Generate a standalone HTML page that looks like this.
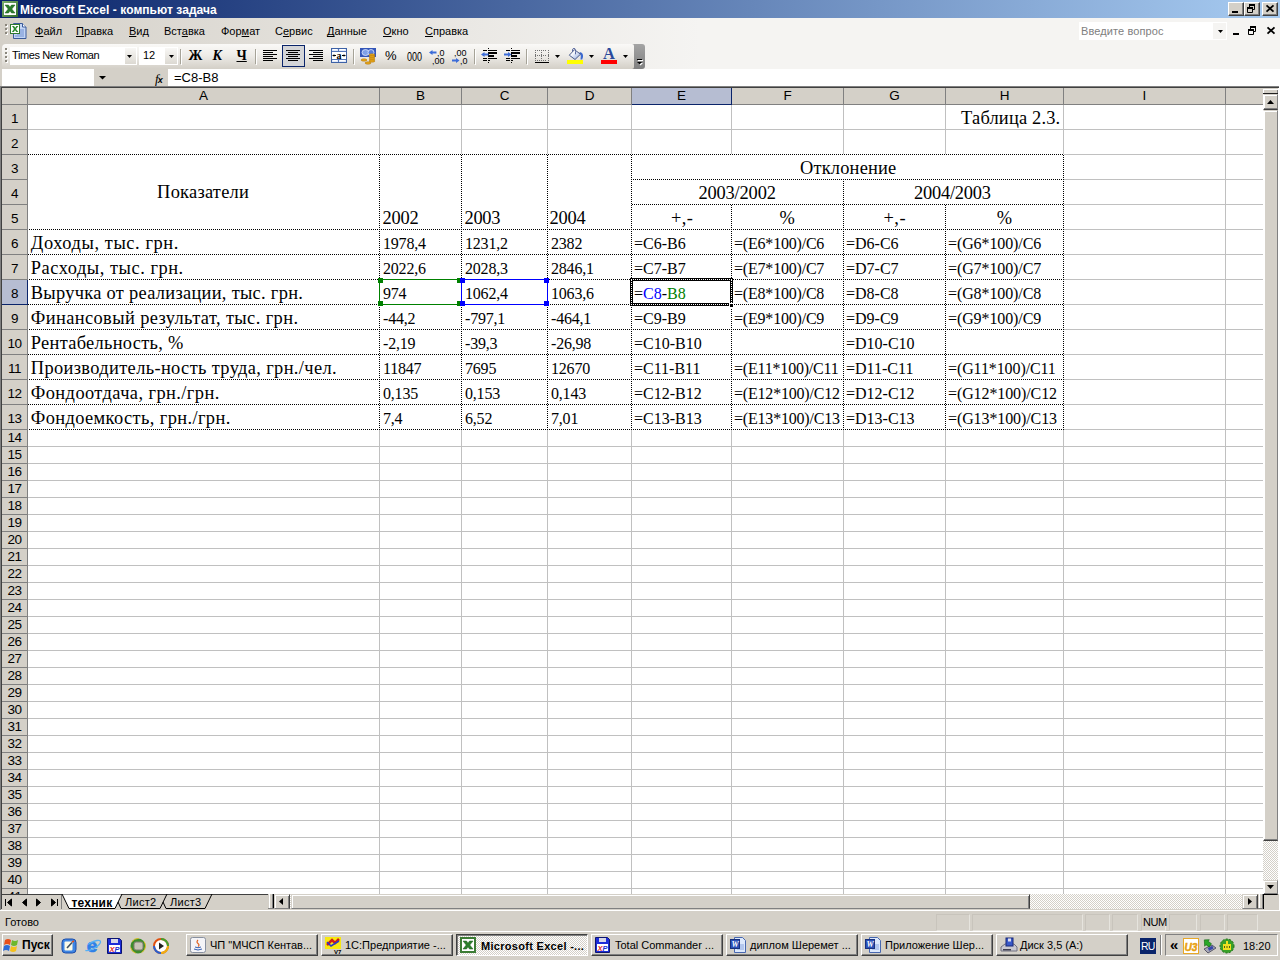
<!DOCTYPE html><html lang="ru"><head><meta charset="utf-8"><title>Microsoft Excel - компьют задача</title><style>
html,body{margin:0;padding:0}
body{width:1280px;height:960px;position:relative;overflow:hidden;background:#d4d0c8;font-family:"Liberation Sans",sans-serif;font-size:11px;color:#000}
.a{position:absolute}
u,.t{text-decoration-skip-ink:none}
.t{position:absolute;white-space:pre;line-height:1}
svg{position:absolute;overflow:visible}
#title{left:0;top:0;width:1280px;height:18px;background:linear-gradient(to right,#0a246a 0,#a6caf0 1270px)}
#title .t{color:#fff;font-weight:bold;font-size:12px;left:20px;top:3.5px;letter-spacing:.05px}
.wb{position:absolute;top:2px;width:14px;height:12px;background:#d4d0c8;border:1px solid;border-color:#fff #404040 #404040 #fff;box-shadow:inset -1px -1px 0 #808080}
#menu{left:0;top:18px;width:1280px;height:26px;background:linear-gradient(to right,#d4d0c8 0,#f5f4f2 700px)}
#menu .t{top:8px;font-size:11px}
#tbrow{left:0;top:44px;width:1280px;height:25px;background:linear-gradient(to right,#d4d0c8 0,#f5f4f2 700px)}
#tb{left:2px;top:0;width:632px;height:25px;border-radius:4px 2px 2px 4px;background:linear-gradient(to bottom,#faf9f7 0,#eeece8 45%,#d3cfc7 100%)}
#tbend{left:631px;top:0;width:14px;height:25px;border-radius:0 3px 3px 0;background:linear-gradient(to bottom,#a4a4a4 0,#808080 100%)}
.sep{position:absolute;top:5px;width:1px;height:15px;background:#a6a398;box-shadow:1px 1px 0 #fff}
#fbar{left:0;top:69px;width:1280px;height:17px;background:#d4d0c8}
.rh{position:absolute;left:2px;width:25px;text-align:center;font-size:13.5px;letter-spacing:-.6px;line-height:1;white-space:pre}
.ch{position:absolute;top:89.2px;text-align:center;font-size:13.5px;line-height:1;white-space:pre}
.c14{position:absolute;white-space:pre;line-height:1;font-family:"Liberation Serif",serif;font-size:18.4px}
.c12{position:absolute;white-space:pre;line-height:1;font-family:"Liberation Serif",serif;font-size:16px}
.hl{position:absolute;height:1px;background:#c0c0c0}
.vl{position:absolute;width:1px;background:#c0c0c0}
.dh{position:absolute;height:1px;background:repeating-conic-gradient(#000 0 25%,#fff 0 50%) 0 0/2px 2px}
.dv{position:absolute;width:1px;background:repeating-conic-gradient(#000 0 25%,#fff 0 50%) 0 0/2px 2px}
.vsb{position:absolute;background:#d4d0c8;box-sizing:border-box;border:1px solid;border-color:#d4d0c8 #808080 #404040 #fff;box-shadow:inset 0 -1px 0 #808080,inset 1px 1px 0 #fff}
.hsb{position:absolute;background:#d4d0c8;box-sizing:border-box;border:1px solid;border-color:#d4d0c8 #404040 #808080 #d4d0c8;box-shadow:inset 1px 1px 0 #fff,inset -1px 0 0 #808080}
.chk{background:repeating-conic-gradient(#fff 0 25%,#d4d0c8 0 50%) 0 0/2px 2px}
.btn{position:absolute;background:#d4d0c8;box-sizing:border-box;border:1px solid;border-color:#fff #404040 #404040 #fff;box-shadow:inset -1px -1px 0 #808080}
.sbtn{position:absolute;background:#d4d0c8;box-sizing:border-box;border:1px solid;border-color:#d4d0c8 #404040 #404040 #d4d0c8;box-shadow:inset -1px -1px 0 #808080,inset 1px 1px 0 #fff}
.tk{position:absolute;top:934px;width:132px;height:22px;box-sizing:border-box;background:#d4d0c8;border:1px solid;border-color:#fff #404040 #404040 #fff;box-shadow:inset -1px -1px 0 #808080}
.tk .t{left:23px;top:5px;font-size:11px;letter-spacing:0}
.tk.on{border-color:#404040 #fff #fff #404040;box-shadow:inset 1px 1px 0 #808080;background:repeating-conic-gradient(#fff 0 25%,#d4d0c8 0 50%) 0 0/2px 2px}
.tk.on .t{font-weight:bold;top:6px;left:24px;letter-spacing:.3px}
.sp{position:absolute;top:914px;height:17px;box-sizing:border-box;border:1px solid;border-color:#c8c4bc #e6e4de #e6e4de #c8c4bc}
</style></head><body>
<div id="title" class="a"><span class="t">Microsoft Excel - компьют задача</span>
<div class="wb" style="left:1228px"></div><div class="wb" style="left:1244px"></div><div class="wb" style="left:1262px"></div>
</div>
<svg style="left:2px;top:1px" width="16" height="16" viewBox="0 0 16 16" ><defs><linearGradient id="g1" x1="0" y1="0" x2="1" y2="1"><stop offset="0" stop-color="#7fb26f"/><stop offset="1" stop-color="#2f6a2a"/></linearGradient></defs><rect width="16" height="16" fill="url(#g1)"/><rect x="2" y="2" width="12" height="12" fill="#fff"/><path d="M3 4 L6.500 4 L8 6.200 L9.500 4 L13 4 L9.800 8 L13 12 L9.500 12 L8 9.800 L6.500 12 L3 12 L6.200 8 Z" fill="#2a7e2a" stroke="#1c5c1c" stroke-width=".5"/></svg>
<svg style="left:1228px;top:2px" width="16" height="14" viewBox="0 0 16 14" ><rect x="4" y="9" width="6" height="2" fill="#000"/></svg>
<svg style="left:1244px;top:2px" width="16" height="14" viewBox="0 0 16 14" ><path d="M5.5 2.5h5v5h-5z" fill="none" stroke="#000"/><rect x="5" y="2" width="6" height="2" fill="#000"/><path d="M3.5 5.5h5v5h-5z" fill="#d4d0c8" stroke="#000"/><rect x="3" y="5" width="6" height="2" fill="#000"/></svg>
<svg style="left:1262px;top:2px" width="16" height="14" viewBox="0 0 16 14" ><path d="M4.5 3.3 L11.5 9.700 M11.5 3.3 L4.5 9.700" stroke="#000" stroke-width="1.8" fill="none"/></svg>
<div id="menu" class="a">
<span class="t" style="left:35px"><u>Ф</u>айл</span>
<span class="t" style="left:76px"><u>П</u>равка</span>
<span class="t" style="left:129px"><u>В</u>ид</span>
<span class="t" style="left:164px">Вст<u>а</u>вка</span>
<span class="t" style="left:221px">Фор<u>м</u>ат</span>
<span class="t" style="left:275px">С<u>е</u>рвис</span>
<span class="t" style="left:327px"><u>Д</u>анные</span>
<span class="t" style="left:383px"><u>О</u>кно</span>
<span class="t" style="left:425px"><u>С</u>правка</span>
<div class="a" style="left:1079px;top:4px;width:148px;height:18px;background:#fff"></div>
<div class="a" style="left:1213px;top:5px;width:13px;height:16px;background:#f5f4f2"></div>
<span class="t" style="left:1081px;top:8px;color:#808080;letter-spacing:.1px">Введите вопрос</span>
</div>
<svg style="left:1218px;top:30px" width="5" height="3" viewBox="0 0 5 3" ><path d="M0 0h5l-2.500 3z" fill="#000"/></svg>
<svg style="left:1230px;top:24px" width="48" height="14" viewBox="0 0 48 14" ><rect x="3" y="9" width="6" height="2" fill="#000"/><path d="M20.5 2.5h5v5h-5z" fill="none" stroke="#000"/><rect x="20" y="2" width="6" height="2" fill="#000"/><path d="M18.5 5.5h5v5h-5z" fill="#f5f4f2" stroke="#000"/><rect x="18" y="5" width="6" height="2" fill="#000"/><path d="M37.5 3.3 L44.5 9.700 M44.5 3.3 L37.5 9.700" stroke="#000" stroke-width="1.8" fill="none"/></svg>
<svg style="left:5px;top:24px" width="3" height="12" viewBox="0 0 3 12" ><rect x="1" y="1" width="2" height="2" fill="#fff"/><rect x="0" y="0" width="2" height="2" fill="#8a867c"/><rect x="1" y="5" width="2" height="2" fill="#fff"/><rect x="0" y="4" width="2" height="2" fill="#8a867c"/><rect x="1" y="9" width="2" height="2" fill="#fff"/><rect x="0" y="8" width="2" height="2" fill="#8a867c"/></svg>
<svg style="left:9px;top:22px" width="18" height="17" viewBox="0 0 18 17" ><path d="M4.5 1.5h9l3.5 3.5v11.5h-12.5z" fill="#c3d5f5" stroke="#3a5a9a"/><path d="M13.5 1.5v3.5h3.5" fill="#fff" stroke="#3a5a9a"/><path d="M8 8h7M8 10h7M8 12h7M6 14h9" stroke="#6f8fd0" stroke-width="1"/><rect x="1.500" y="2.500" width="9" height="9" fill="#fff" stroke="#2f7a2f"/><path d="M3 4h2l1.200 1.800L7.400 4h2L7 7l2.400 3h-2L6 8.200 4.800 10h-2L5 7z" fill="#2e8b2e"/></svg>
<div id="tbrow" class="a"><div id="tbend" class="a"></div><div id="tb" class="a"></div>
<div class="a" style="left:10px;top:3px;width:127px;height:18px;background:#fff"></div>
<div class="a" style="left:125px;top:4px;width:11px;height:16px;background:linear-gradient(#f8f7f5,#dcd9d2)"></div>
<span class="t" style="left:12px;top:6px;letter-spacing:-.4px">Times New Roman</span>
<div class="a" style="left:139px;top:3px;width:39px;height:18px;background:#fff"></div>
<div class="a" style="left:165px;top:4px;width:12px;height:16px;background:linear-gradient(#f8f7f5,#dcd9d2)"></div>
<span class="t" style="left:143px;top:6px">12</span>
<div class="sep" style="left:180px"></div>
<div class="sep" style="left:255px"></div>
<div class="sep" style="left:353px"></div>
<div class="sep" style="left:474px"></div>
<div class="sep" style="left:526px"></div>
<div class="a" style="left:282px;top:1px;width:21px;height:20px;border:1px solid #0a246a;background:#d4d5d8"></div>
<span class="t" style="left:188.5px;top:5px;font-family:'Liberation Serif',serif;font-weight:bold;font-size:14px">Ж</span>
<span class="t" style="left:212.5px;top:5px;font-family:'Liberation Serif',serif;font-weight:bold;font-style:italic;font-size:14px">К</span>
<span class="t" style="left:236.5px;top:5px;font-family:'Liberation Serif',serif;font-weight:bold;font-size:14px;text-decoration:underline">Ч</span>
<span class="t" style="left:385px;top:5px;font-size:13px">%</span>
</div>
<svg style="left:5px;top:48px" width="3" height="16" viewBox="0 0 3 16" ><rect x="1" y="1" width="2" height="2" fill="#fff"/><rect x="0" y="0" width="2" height="2" fill="#8a867c"/><rect x="1" y="5" width="2" height="2" fill="#fff"/><rect x="0" y="4" width="2" height="2" fill="#8a867c"/><rect x="1" y="9" width="2" height="2" fill="#fff"/><rect x="0" y="8" width="2" height="2" fill="#8a867c"/><rect x="1" y="13" width="2" height="2" fill="#fff"/><rect x="0" y="12" width="2" height="2" fill="#8a867c"/></svg>
<svg style="left:127px;top:55px" width="5" height="3" viewBox="0 0 5 3" ><path d="M0 0h5l-2.500 3z" fill="#000"/></svg>
<svg style="left:169px;top:55px" width="5" height="3" viewBox="0 0 5 3" ><path d="M0 0h5l-2.500 3z" fill="#000"/></svg>
<svg style="left:263px;top:50px" width="16" height="12" viewBox="0 0 16 12" ><rect x="0" y="0" width="14" height="1" fill="#000"/><rect x="0" y="2" width="10" height="1" fill="#000"/><rect x="0" y="4" width="14" height="1" fill="#000"/><rect x="0" y="6" width="10" height="1" fill="#000"/><rect x="0" y="8" width="14" height="1" fill="#000"/><rect x="0" y="10" width="10" height="1" fill="#000"/></svg>
<svg style="left:286px;top:50px" width="16" height="12" viewBox="0 0 16 12" ><rect x="0" y="0" width="14" height="1" fill="#000"/><rect x="2" y="2" width="10" height="1" fill="#000"/><rect x="0" y="4" width="14" height="1" fill="#000"/><rect x="2" y="6" width="10" height="1" fill="#000"/><rect x="0" y="8" width="14" height="1" fill="#000"/><rect x="2" y="10" width="10" height="1" fill="#000"/></svg>
<svg style="left:309px;top:50px" width="16" height="12" viewBox="0 0 16 12" ><rect x="0" y="0" width="14" height="1" fill="#000"/><rect x="4" y="2" width="10" height="1" fill="#000"/><rect x="0" y="4" width="14" height="1" fill="#000"/><rect x="4" y="6" width="10" height="1" fill="#000"/><rect x="0" y="8" width="14" height="1" fill="#000"/><rect x="4" y="10" width="10" height="1" fill="#000"/></svg>
<svg style="left:331px;top:48px" width="16" height="15" viewBox="0 0 16 15" ><rect x="0.500" y="0.500" width="15" height="14" fill="#dfe8fa" stroke="#3e62a6"/><rect x="1" y="4" width="14" height="7" fill="#fff"/><path d="M1 3.500h14M1 11.500h14M7.500 1v3M7.500 11v3" stroke="#5476b8" stroke-width="1"/><path d="M2 1.500h4M9 1.500h5M2 12.500h4M9 12.500h5" stroke="#fff"/><text x="8" y="10.500" font-family="Liberation Serif,serif" font-weight="bold" font-size="10" text-anchor="middle" fill="#000">a</text><path d="M1.500 7.500h3.500M11 7.500h3.500M3 6.500v2M13 6.500v2" stroke="#000"/></svg>
<svg style="left:360px;top:48px" width="17" height="17" viewBox="0 0 17 17" ><rect x="0" y="0" width="16" height="9" fill="#3456b8"/><ellipse cx="5.500" cy="4.500" rx="3.500" ry="3" fill="#7fa0e8" stroke="#dfe8ff" stroke-width=".8"/><ellipse cx="11" cy="4.500" rx="3" ry="3" fill="#5a7fd8" stroke="#dfe8ff" stroke-width=".8"/><g fill="#e8a818" stroke="#a86c08" stroke-width=".5"><ellipse cx="12" cy="7" rx="3" ry="1.200"/><ellipse cx="12" cy="9" rx="3" ry="1.200"/><ellipse cx="12" cy="11" rx="3" ry="1.200"/><ellipse cx="12" cy="13" rx="3" ry="1.200"/><ellipse cx="4" cy="12" rx="3" ry="1.200"/><ellipse cx="8" cy="15" rx="3" ry="1.200"/></g></svg>
<svg style="left:407px;top:51px" width="16" height="11" viewBox="0 0 16 11" ><text x="0" y="10" font-family="Liberation Sans,sans-serif" font-size="13" textLength="15" lengthAdjust="spacingAndGlyphs" fill="#000">000</text></svg>
<svg style="left:429px;top:48px" width="17" height="16" viewBox="0 0 17 16" ><path d="M0 4.5l3.500 -2.500v1.500h4v2h-4v1.500z" fill="#3c6cd8"/><text x="8" y="7.500" font-family="Liberation Sans,sans-serif" font-size="9.500" textLength="7.500" lengthAdjust="spacingAndGlyphs">,0</text><text x="3" y="15.500" font-family="Liberation Sans,sans-serif" font-size="9.500" textLength="12.500" lengthAdjust="spacingAndGlyphs">,00</text></svg>
<svg style="left:452px;top:48px" width="17" height="16" viewBox="0 0 17 16" ><path d="M7.5 12.5l-3.500 -2.500v1.500h-4v2h4v1.500z" fill="#3c6cd8"/><text x="2" y="7.500" font-family="Liberation Sans,sans-serif" font-size="9.500" textLength="12.500" lengthAdjust="spacingAndGlyphs">,00</text><text x="8" y="15.500" font-family="Liberation Sans,sans-serif" font-size="9.500" textLength="7.500" lengthAdjust="spacingAndGlyphs">,0</text></svg>
<svg style="left:481px;top:48px" width="17" height="16" viewBox="0 0 17 16" ><path d="M2 2.500h4M2 10.500h4M2 12.500h4M7 2.500h9M7 10.500h9M7 12.500h2" stroke="#000"/><rect x="7" y="4" width="9" height="2" fill="#000"/><rect x="7" y="7" width="6" height="2" fill="#000"/><rect x="7" y="0" width="1" height="1" fill="#000"/><rect x="7" y="2" width="1" height="1" fill="#000"/><rect x="7" y="4" width="1" height="1" fill="#000"/><rect x="7" y="6" width="1" height="1" fill="#000"/><rect x="7" y="8" width="1" height="1" fill="#000"/><rect x="7" y="10" width="1" height="1" fill="#000"/><rect x="7" y="12" width="1" height="1" fill="#000"/><rect x="7" y="14" width="1" height="1" fill="#000"/><path d="M0 6.5l3.500 -2.500v1.500h4v2h-4v1.500z" fill="#3c6cd8"/></svg>
<svg style="left:504px;top:48px" width="17" height="16" viewBox="0 0 17 16" ><path d="M2 2.500h4M2 10.500h4M2 12.500h4M7 2.500h9M7 10.500h9M7 12.500h2" stroke="#000"/><rect x="7" y="4" width="9" height="2" fill="#000"/><rect x="7" y="7" width="6" height="2" fill="#000"/><rect x="7" y="0" width="1" height="1" fill="#000"/><rect x="7" y="2" width="1" height="1" fill="#000"/><rect x="7" y="4" width="1" height="1" fill="#000"/><rect x="7" y="6" width="1" height="1" fill="#000"/><rect x="7" y="8" width="1" height="1" fill="#000"/><rect x="7" y="10" width="1" height="1" fill="#000"/><rect x="7" y="12" width="1" height="1" fill="#000"/><rect x="7" y="14" width="1" height="1" fill="#000"/><path d="M7.5 6.5l-3.500 -2.500v1.500h-4v2h4v1.500z" fill="#3c6cd8"/></svg>
<svg style="left:535px;top:50px" width="14" height="14" viewBox="0 0 14 14" ><rect x="0" y="0" width="1" height="1" fill="#707070"/><rect x="2" y="0" width="1" height="1" fill="#707070"/><rect x="4" y="0" width="1" height="1" fill="#707070"/><rect x="6" y="0" width="1" height="1" fill="#707070"/><rect x="8" y="0" width="1" height="1" fill="#707070"/><rect x="10" y="0" width="1" height="1" fill="#707070"/><rect x="13" y="0" width="1" height="1" fill="#707070"/><rect x="0" y="5" width="1" height="1" fill="#707070"/><rect x="2" y="5" width="1" height="1" fill="#707070"/><rect x="4" y="5" width="1" height="1" fill="#707070"/><rect x="6" y="5" width="1" height="1" fill="#707070"/><rect x="8" y="5" width="1" height="1" fill="#707070"/><rect x="10" y="5" width="1" height="1" fill="#707070"/><rect x="13" y="5" width="1" height="1" fill="#707070"/><rect x="0" y="10" width="1" height="1" fill="#707070"/><rect x="2" y="10" width="1" height="1" fill="#707070"/><rect x="4" y="10" width="1" height="1" fill="#707070"/><rect x="6" y="10" width="1" height="1" fill="#707070"/><rect x="8" y="10" width="1" height="1" fill="#707070"/><rect x="10" y="10" width="1" height="1" fill="#707070"/><rect x="13" y="10" width="1" height="1" fill="#707070"/><rect x="0" y="0" width="1" height="1" fill="#707070"/><rect x="0" y="2" width="1" height="1" fill="#707070"/><rect x="0" y="4" width="1" height="1" fill="#707070"/><rect x="0" y="6" width="1" height="1" fill="#707070"/><rect x="0" y="8" width="1" height="1" fill="#707070"/><rect x="0" y="10" width="1" height="1" fill="#707070"/><rect x="6" y="0" width="1" height="1" fill="#707070"/><rect x="6" y="2" width="1" height="1" fill="#707070"/><rect x="6" y="4" width="1" height="1" fill="#707070"/><rect x="6" y="6" width="1" height="1" fill="#707070"/><rect x="6" y="8" width="1" height="1" fill="#707070"/><rect x="6" y="10" width="1" height="1" fill="#707070"/><rect x="13" y="0" width="1" height="1" fill="#707070"/><rect x="13" y="2" width="1" height="1" fill="#707070"/><rect x="13" y="4" width="1" height="1" fill="#707070"/><rect x="13" y="6" width="1" height="1" fill="#707070"/><rect x="13" y="8" width="1" height="1" fill="#707070"/><rect x="13" y="10" width="1" height="1" fill="#707070"/><rect x="0" y="12" width="14" height="1" fill="#000"/></svg>
<svg style="left:555px;top:55px" width="5" height="3" viewBox="0 0 5 3" ><path d="M0 0h5l-2.500 3z" fill="#000"/></svg>
<svg style="left:589px;top:55px" width="5" height="3" viewBox="0 0 5 3" ><path d="M0 0h5l-2.500 3z" fill="#000"/></svg>
<svg style="left:623px;top:55px" width="5" height="3" viewBox="0 0 5 3" ><path d="M0 0h5l-2.500 3z" fill="#000"/></svg>
<svg style="left:567px;top:47px" width="17" height="17" viewBox="0 0 17 17" ><defs><linearGradient id="gb" x1="0" y1="0" x2="1" y2="1"><stop offset=".3" stop-color="#fff"/><stop offset="1" stop-color="#8aa4dc"/></linearGradient></defs><rect x="0" y="13" width="16" height="4" fill="#ff0"/><path d="M12.500 5q4 .5 3.500 5l-.8 2.500l-1.700 0l.3 -3.500z" fill="#3a68d0"/><path d="M2.300 8.200L7.500 2.700L13.500 7.200L8 12.500z" fill="url(#gb)" stroke="#3a4c80" stroke-width=".9"/><path d="M5.500 4.800q-.5 -3.500 1.500 -3.500t1.500 6" fill="none" stroke="#54649c" stroke-width="1"/></svg>
<svg style="left:601px;top:47px" width="17" height="17" viewBox="0 0 17 17" ><rect x="0" y="13" width="16" height="4" fill="#f00"/><text x="8" y="11.500" text-anchor="middle" font-family="Liberation Serif,serif" font-weight="bold" font-size="16.500" fill="#2a4a9c">A</text></svg>
<svg style="left:637px;top:59px" width="7" height="7" viewBox="0 0 7 7" ><rect x="1" y="1" width="5" height="1" fill="#fff"/><rect x="0" y="0" width="5" height="1" fill="#000"/><path d="M1 4h5l-2.500 2.500z" fill="#fff"/><path d="M0 3h5l-2.500 2.500z" fill="#000"/></svg>
<div id="fbar" class="a">
<div class="a" style="left:2px;top:0;width:92px;height:17px;background:#fff"></div>
<span class="t" style="left:40px;top:2px;font-size:13px">E8</span>
<div class="a" style="left:168px;top:0;width:1112px;height:17px;background:#fff"></div>
<span class="t" style="left:174px;top:2px;font-size:13px">=C8-B8</span>
<span class="t" style="left:155px;top:3px;font-family:'Liberation Serif',serif;font-style:italic;font-size:13px">f<span style="font-family:'Liberation Sans',sans-serif;font-size:9px;font-weight:bold;margin-left:-1px">x</span></span>
</div>
<svg style="left:99px;top:76px" width="8" height="4" viewBox="0 0 8 4" ><path d="M0 0h7l-3.500 3.500z" fill="#000"/></svg>
<div class="a" style="left:0;top:86px;width:1280px;height:808px;background:#fff"></div>
<div class="a" style="left:0;top:86px;width:1279px;height:1px;background:#808080"></div>
<div class="a" style="left:0;top:87px;width:1279px;height:1px;background:#404040"></div>
<div class="a" style="left:0;top:86px;width:1px;height:824px;background:#808080"></div>
<div class="a" style="left:1px;top:87px;width:1px;height:822px;background:#404040"></div>
<div class="a" style="left:2px;top:88px;width:1261px;height:16px;background:#d4d0c8"></div>
<div class="a" style="left:2px;top:88px;width:25px;height:806px;background:#d4d0c8"></div>
<div class="vl" style="left:379px;top:105px;height:789px"></div>
<div class="vl" style="left:461px;top:105px;height:789px"></div>
<div class="vl" style="left:547px;top:105px;height:789px"></div>
<div class="vl" style="left:631px;top:105px;height:789px"></div>
<div class="vl" style="left:731px;top:105px;height:789px"></div>
<div class="vl" style="left:843px;top:105px;height:789px"></div>
<div class="vl" style="left:945px;top:105px;height:789px"></div>
<div class="vl" style="left:1063px;top:105px;height:789px"></div>
<div class="vl" style="left:1225px;top:105px;height:789px"></div>
<div class="hl" style="left:28px;top:129px;width:1235px"></div>
<div class="hl" style="left:28px;top:154px;width:1235px"></div>
<div class="hl" style="left:28px;top:179px;width:1235px"></div>
<div class="hl" style="left:28px;top:204px;width:1235px"></div>
<div class="hl" style="left:28px;top:229px;width:1235px"></div>
<div class="hl" style="left:28px;top:254px;width:1235px"></div>
<div class="hl" style="left:28px;top:279px;width:1235px"></div>
<div class="hl" style="left:28px;top:304px;width:1235px"></div>
<div class="hl" style="left:28px;top:329px;width:1235px"></div>
<div class="hl" style="left:28px;top:354px;width:1235px"></div>
<div class="hl" style="left:28px;top:379px;width:1235px"></div>
<div class="hl" style="left:28px;top:404px;width:1235px"></div>
<div class="hl" style="left:28px;top:429px;width:1235px"></div>
<div class="hl" style="left:28px;top:446px;width:1235px"></div>
<div class="hl" style="left:28px;top:463px;width:1235px"></div>
<div class="hl" style="left:28px;top:480px;width:1235px"></div>
<div class="hl" style="left:28px;top:497px;width:1235px"></div>
<div class="hl" style="left:28px;top:514px;width:1235px"></div>
<div class="hl" style="left:28px;top:531px;width:1235px"></div>
<div class="hl" style="left:28px;top:548px;width:1235px"></div>
<div class="hl" style="left:28px;top:565px;width:1235px"></div>
<div class="hl" style="left:28px;top:582px;width:1235px"></div>
<div class="hl" style="left:28px;top:599px;width:1235px"></div>
<div class="hl" style="left:28px;top:616px;width:1235px"></div>
<div class="hl" style="left:28px;top:633px;width:1235px"></div>
<div class="hl" style="left:28px;top:650px;width:1235px"></div>
<div class="hl" style="left:28px;top:667px;width:1235px"></div>
<div class="hl" style="left:28px;top:684px;width:1235px"></div>
<div class="hl" style="left:28px;top:701px;width:1235px"></div>
<div class="hl" style="left:28px;top:718px;width:1235px"></div>
<div class="hl" style="left:28px;top:735px;width:1235px"></div>
<div class="hl" style="left:28px;top:752px;width:1235px"></div>
<div class="hl" style="left:28px;top:769px;width:1235px"></div>
<div class="hl" style="left:28px;top:786px;width:1235px"></div>
<div class="hl" style="left:28px;top:803px;width:1235px"></div>
<div class="hl" style="left:28px;top:820px;width:1235px"></div>
<div class="hl" style="left:28px;top:837px;width:1235px"></div>
<div class="hl" style="left:28px;top:854px;width:1235px"></div>
<div class="hl" style="left:28px;top:871px;width:1235px"></div>
<div class="hl" style="left:28px;top:888px;width:1235px"></div>
<div class="a" style="left:2px;top:104px;width:1261px;height:1px;background:#808080"></div>
<div class="a" style="left:27px;top:88px;width:1px;height:806px;background:#808080"></div>
<div class="a" style="left:379px;top:88px;width:1px;height:16px;background:#808080"></div>
<div class="a" style="left:461px;top:88px;width:1px;height:16px;background:#808080"></div>
<div class="a" style="left:547px;top:88px;width:1px;height:16px;background:#808080"></div>
<div class="a" style="left:631px;top:88px;width:1px;height:16px;background:#808080"></div>
<div class="a" style="left:731px;top:88px;width:1px;height:16px;background:#808080"></div>
<div class="a" style="left:843px;top:88px;width:1px;height:16px;background:#808080"></div>
<div class="a" style="left:945px;top:88px;width:1px;height:16px;background:#808080"></div>
<div class="a" style="left:1063px;top:88px;width:1px;height:16px;background:#808080"></div>
<div class="a" style="left:1225px;top:88px;width:1px;height:16px;background:#808080"></div>
<div class="a" style="left:2px;top:129px;width:25px;height:1px;background:#808080"></div>
<div class="a" style="left:2px;top:154px;width:25px;height:1px;background:#808080"></div>
<div class="a" style="left:2px;top:179px;width:25px;height:1px;background:#808080"></div>
<div class="a" style="left:2px;top:204px;width:25px;height:1px;background:#808080"></div>
<div class="a" style="left:2px;top:229px;width:25px;height:1px;background:#808080"></div>
<div class="a" style="left:2px;top:254px;width:25px;height:1px;background:#808080"></div>
<div class="a" style="left:2px;top:279px;width:25px;height:1px;background:#808080"></div>
<div class="a" style="left:2px;top:304px;width:25px;height:1px;background:#808080"></div>
<div class="a" style="left:2px;top:329px;width:25px;height:1px;background:#808080"></div>
<div class="a" style="left:2px;top:354px;width:25px;height:1px;background:#808080"></div>
<div class="a" style="left:2px;top:379px;width:25px;height:1px;background:#808080"></div>
<div class="a" style="left:2px;top:404px;width:25px;height:1px;background:#808080"></div>
<div class="a" style="left:2px;top:429px;width:25px;height:1px;background:#808080"></div>
<div class="a" style="left:2px;top:446px;width:25px;height:1px;background:#808080"></div>
<div class="a" style="left:2px;top:463px;width:25px;height:1px;background:#808080"></div>
<div class="a" style="left:2px;top:480px;width:25px;height:1px;background:#808080"></div>
<div class="a" style="left:2px;top:497px;width:25px;height:1px;background:#808080"></div>
<div class="a" style="left:2px;top:514px;width:25px;height:1px;background:#808080"></div>
<div class="a" style="left:2px;top:531px;width:25px;height:1px;background:#808080"></div>
<div class="a" style="left:2px;top:548px;width:25px;height:1px;background:#808080"></div>
<div class="a" style="left:2px;top:565px;width:25px;height:1px;background:#808080"></div>
<div class="a" style="left:2px;top:582px;width:25px;height:1px;background:#808080"></div>
<div class="a" style="left:2px;top:599px;width:25px;height:1px;background:#808080"></div>
<div class="a" style="left:2px;top:616px;width:25px;height:1px;background:#808080"></div>
<div class="a" style="left:2px;top:633px;width:25px;height:1px;background:#808080"></div>
<div class="a" style="left:2px;top:650px;width:25px;height:1px;background:#808080"></div>
<div class="a" style="left:2px;top:667px;width:25px;height:1px;background:#808080"></div>
<div class="a" style="left:2px;top:684px;width:25px;height:1px;background:#808080"></div>
<div class="a" style="left:2px;top:701px;width:25px;height:1px;background:#808080"></div>
<div class="a" style="left:2px;top:718px;width:25px;height:1px;background:#808080"></div>
<div class="a" style="left:2px;top:735px;width:25px;height:1px;background:#808080"></div>
<div class="a" style="left:2px;top:752px;width:25px;height:1px;background:#808080"></div>
<div class="a" style="left:2px;top:769px;width:25px;height:1px;background:#808080"></div>
<div class="a" style="left:2px;top:786px;width:25px;height:1px;background:#808080"></div>
<div class="a" style="left:2px;top:803px;width:25px;height:1px;background:#808080"></div>
<div class="a" style="left:2px;top:820px;width:25px;height:1px;background:#808080"></div>
<div class="a" style="left:2px;top:837px;width:25px;height:1px;background:#808080"></div>
<div class="a" style="left:2px;top:854px;width:25px;height:1px;background:#808080"></div>
<div class="a" style="left:2px;top:871px;width:25px;height:1px;background:#808080"></div>
<div class="a" style="left:2px;top:888px;width:25px;height:1px;background:#808080"></div>
<div class="a" style="left:632px;top:88px;width:99px;height:16px;background:#b6bdd2;border-bottom:1px solid #0a246a;border-right:1px solid #0a246a"></div>
<div class="a" style="left:2px;top:280px;width:25px;height:24px;background:#b6bdd2;border-bottom:1px solid #0a246a;border-right:1px solid #0a246a"></div>
<span class="ch" style="left:28px;width:351px">A</span>
<span class="ch" style="left:380px;width:81px">B</span>
<span class="ch" style="left:462px;width:85px">C</span>
<span class="ch" style="left:548px;width:83px">D</span>
<span class="ch" style="left:632px;width:99px">E</span>
<span class="ch" style="left:732px;width:111px">F</span>
<span class="ch" style="left:844px;width:101px">G</span>
<span class="ch" style="left:946px;width:117px">H</span>
<span class="ch" style="left:1064px;width:161px">I</span>
<span class="rh" style="top:112.2px">1</span>
<span class="rh" style="top:137.2px">2</span>
<span class="rh" style="top:162.2px">3</span>
<span class="rh" style="top:187.2px">4</span>
<span class="rh" style="top:212.2px">5</span>
<span class="rh" style="top:237.2px">6</span>
<span class="rh" style="top:262.2px">7</span>
<span class="rh" style="top:287.2px">8</span>
<span class="rh" style="top:312.2px">9</span>
<span class="rh" style="top:337.2px">10</span>
<span class="rh" style="top:362.2px">11</span>
<span class="rh" style="top:387.2px">12</span>
<span class="rh" style="top:412.2px">13</span>
<span class="rh" style="top:431.2px">14</span>
<span class="rh" style="top:448.2px">15</span>
<span class="rh" style="top:465.2px">16</span>
<span class="rh" style="top:482.2px">17</span>
<span class="rh" style="top:499.2px">18</span>
<span class="rh" style="top:516.2px">19</span>
<span class="rh" style="top:533.2px">20</span>
<span class="rh" style="top:550.2px">21</span>
<span class="rh" style="top:567.2px">22</span>
<span class="rh" style="top:584.2px">23</span>
<span class="rh" style="top:601.2px">24</span>
<span class="rh" style="top:618.2px">25</span>
<span class="rh" style="top:635.2px">26</span>
<span class="rh" style="top:652.2px">27</span>
<span class="rh" style="top:669.2px">28</span>
<span class="rh" style="top:686.2px">29</span>
<span class="rh" style="top:703.2px">30</span>
<span class="rh" style="top:720.2px">31</span>
<span class="rh" style="top:737.2px">32</span>
<span class="rh" style="top:754.2px">33</span>
<span class="rh" style="top:771.2px">34</span>
<span class="rh" style="top:788.2px">35</span>
<span class="rh" style="top:805.2px">36</span>
<span class="rh" style="top:822.2px">37</span>
<span class="rh" style="top:839.2px">38</span>
<span class="rh" style="top:856.2px">39</span>
<span class="rh" style="top:873.2px">40</span>
<div class="a" style="left:2px;top:889px;width:25px;height:5px;overflow:hidden"><span class="rh" style="left:0;top:1.2px">41</span></div>
<div class="a" style="left:28px;top:155px;width:1035px;height:274px;background:#fff"></div>
<div class="dh" style="left:28px;top:154px;width:1036px;background-position:1px 0px"></div>
<div class="dh" style="left:631px;top:179px;width:433px;background-position:0px 1px"></div>
<div class="dh" style="left:631px;top:204px;width:433px;background-position:0px 0px"></div>
<div class="dh" style="left:28px;top:229px;width:1036px;background-position:1px 1px"></div>
<div class="dh" style="left:28px;top:254px;width:1036px;background-position:1px 0px"></div>
<div class="dh" style="left:28px;top:279px;width:1036px;background-position:1px 1px"></div>
<div class="dh" style="left:28px;top:304px;width:1036px;background-position:1px 0px"></div>
<div class="dh" style="left:28px;top:329px;width:1036px;background-position:1px 1px"></div>
<div class="dh" style="left:28px;top:354px;width:1036px;background-position:1px 0px"></div>
<div class="dh" style="left:28px;top:379px;width:1036px;background-position:1px 1px"></div>
<div class="dh" style="left:28px;top:404px;width:1036px;background-position:1px 0px"></div>
<div class="dh" style="left:28px;top:429px;width:1036px;background-position:1px 1px"></div>
<div class="dv" style="left:379px;top:154px;height:276px;background-position:0px 0px"></div>
<div class="dv" style="left:461px;top:154px;height:276px;background-position:0px 0px"></div>
<div class="dv" style="left:547px;top:154px;height:276px;background-position:0px 0px"></div>
<div class="dv" style="left:631px;top:154px;height:276px;background-position:0px 0px"></div>
<div class="dv" style="left:1063px;top:154px;height:276px;background-position:0px 0px"></div>
<div class="dv" style="left:843px;top:179px;height:251px;background-position:0px 1px"></div>
<div class="dv" style="left:731px;top:204px;height:226px;background-position:0px 0px"></div>
<div class="dv" style="left:945px;top:204px;height:226px;background-position:0px 0px"></div>
<span class="c14" style="left:961.1px;top:109px;letter-spacing:0.188px">Таблица 2.3.</span>
<span class="c14" style="left:157.1px;top:183px;letter-spacing:0.253px">Показатели</span>
<span class="c14" style="left:799.9px;top:159px;letter-spacing:0.212px">Отклонение</span>
<span class="c14" style="left:698.5px;top:184px;letter-spacing:-0.165px">2003/2002</span>
<span class="c14" style="left:914.1px;top:184px;letter-spacing:-0.243px">2004/2003</span>
<span class="c14" style="left:670.9px;top:209px;letter-spacing:0.502px">+,-</span>
<span class="c14" style="left:779.5px;top:209px;letter-spacing:1.672px">%</span>
<span class="c14" style="left:883.5px;top:209px;letter-spacing:0.502px">+,-</span>
<span class="c14" style="left:996.8px;top:209px;letter-spacing:1.172px">%</span>
<span class="c14" style="left:382.5px;top:209px;letter-spacing:-0.195px">2002</span>
<span class="c14" style="left:464.5px;top:209px;letter-spacing:-0.32px">2003</span>
<span class="c14" style="left:549.5px;top:209px;letter-spacing:-0.195px">2004</span>
<span class="c14" style="left:30.8px;top:234px;letter-spacing:0.578px">Доходы, тыс. грн.</span>
<span class="c12" style="left:383px;top:236px;letter-spacing:-0.2px">1978,4</span>
<span class="c12" style="left:465px;top:236px;letter-spacing:-0.2px">1231,2</span>
<span class="c12" style="left:551px;top:236px;letter-spacing:-0.2px">2382</span>
<span class="c12" style="left:634px;top:236px;letter-spacing:0px">=C6-B6</span>
<span class="c12" style="left:846px;top:236px;letter-spacing:0px">=D6-C6</span>
<span class="c12" style="left:734px;top:236px;letter-spacing:-0.2px">=(E6*100)/C6</span>
<span class="c12" style="left:948px;top:236px;letter-spacing:-0.1px">=(G6*100)/C6</span>
<span class="c14" style="left:30.8px;top:259px;letter-spacing:0.533px">Расходы, тыс. грн.</span>
<span class="c12" style="left:383px;top:261px;letter-spacing:-0.2px">2022,6</span>
<span class="c12" style="left:465px;top:261px;letter-spacing:-0.2px">2028,3</span>
<span class="c12" style="left:551px;top:261px;letter-spacing:-0.2px">2846,1</span>
<span class="c12" style="left:634px;top:261px;letter-spacing:0px">=C7-B7</span>
<span class="c12" style="left:846px;top:261px;letter-spacing:0px">=D7-C7</span>
<span class="c12" style="left:734px;top:261px;letter-spacing:-0.2px">=(E7*100)/C7</span>
<span class="c12" style="left:948px;top:261px;letter-spacing:-0.1px">=(G7*100)/C7</span>
<span class="c14" style="left:30.8px;top:284px;letter-spacing:0.293px">Выручка от реализации, тыс. грн.</span>
<span class="c12" style="left:383px;top:286px;letter-spacing:-0.2px">974</span>
<span class="c12" style="left:465px;top:286px;letter-spacing:-0.2px">1062,4</span>
<span class="c12" style="left:551px;top:286px;letter-spacing:-0.2px">1063,6</span>
<span class="c12" style="left:846px;top:286px;letter-spacing:0px">=D8-C8</span>
<span class="c12" style="left:734px;top:286px;letter-spacing:-0.2px">=(E8*100)/C8</span>
<span class="c12" style="left:948px;top:286px;letter-spacing:-0.1px">=(G8*100)/C8</span>
<span class="c14" style="left:30.8px;top:309px;letter-spacing:0.39px">Финансовый результат, тыс. грн.</span>
<span class="c12" style="left:383px;top:311px;letter-spacing:-0.2px">-44,2</span>
<span class="c12" style="left:465px;top:311px;letter-spacing:-0.2px">-797,1</span>
<span class="c12" style="left:551px;top:311px;letter-spacing:-0.2px">-464,1</span>
<span class="c12" style="left:634px;top:311px;letter-spacing:0px">=C9-B9</span>
<span class="c12" style="left:846px;top:311px;letter-spacing:0px">=D9-C9</span>
<span class="c12" style="left:734px;top:311px;letter-spacing:-0.2px">=(E9*100)/C9</span>
<span class="c12" style="left:948px;top:311px;letter-spacing:-0.1px">=(G9*100)/C9</span>
<span class="c14" style="left:30.8px;top:334px;letter-spacing:0.297px">Рентабельность, %</span>
<span class="c12" style="left:383px;top:336px;letter-spacing:-0.2px">-2,19</span>
<span class="c12" style="left:465px;top:336px;letter-spacing:-0.2px">-39,3</span>
<span class="c12" style="left:551px;top:336px;letter-spacing:-0.2px">-26,98</span>
<span class="c12" style="left:634px;top:336px;letter-spacing:0px">=C10-B10</span>
<span class="c12" style="left:846px;top:336px;letter-spacing:0px">=D10-C10</span>
<span class="c14" style="left:30.8px;top:359px;letter-spacing:0.358px">Производитель-ность труда, грн./чел.</span>
<span class="c12" style="left:383px;top:361px;letter-spacing:-0.2px">11847</span>
<span class="c12" style="left:465px;top:361px;letter-spacing:-0.2px">7695</span>
<span class="c12" style="left:551px;top:361px;letter-spacing:-0.2px">12670</span>
<span class="c12" style="left:634px;top:361px;letter-spacing:0px">=C11-B11</span>
<span class="c12" style="left:846px;top:361px;letter-spacing:0px">=D11-C11</span>
<span class="c12" style="left:734px;top:361px;letter-spacing:-0.2px">=(E11*100)/C11</span>
<span class="c12" style="left:948px;top:361px;letter-spacing:-0.1px">=(G11*100)/C11</span>
<span class="c14" style="left:30.8px;top:384px;letter-spacing:0.417px">Фондоотдача, грн./грн.</span>
<span class="c12" style="left:383px;top:386px;letter-spacing:-0.2px">0,135</span>
<span class="c12" style="left:465px;top:386px;letter-spacing:-0.2px">0,153</span>
<span class="c12" style="left:551px;top:386px;letter-spacing:-0.2px">0,143</span>
<span class="c12" style="left:634px;top:386px;letter-spacing:0px">=C12-B12</span>
<span class="c12" style="left:846px;top:386px;letter-spacing:0px">=D12-C12</span>
<span class="c12" style="left:734px;top:386px;letter-spacing:-0.2px">=(E12*100)/C12</span>
<span class="c12" style="left:948px;top:386px;letter-spacing:-0.1px">=(G12*100)/C12</span>
<span class="c14" style="left:30.8px;top:409px;letter-spacing:0.381px">Фондоемкость, грн./грн.</span>
<span class="c12" style="left:383px;top:411px;letter-spacing:-0.2px">7,4</span>
<span class="c12" style="left:465px;top:411px;letter-spacing:-0.2px">6,52</span>
<span class="c12" style="left:551px;top:411px;letter-spacing:-0.2px">7,01</span>
<span class="c12" style="left:634px;top:411px;letter-spacing:0px">=C13-B13</span>
<span class="c12" style="left:846px;top:411px;letter-spacing:0px">=D13-C13</span>
<span class="c12" style="left:734px;top:411px;letter-spacing:-0.2px">=(E13*100)/C13</span>
<span class="c12" style="left:948px;top:411px;letter-spacing:-0.1px">=(G13*100)/C13</span>
<span class="c12" style="left:634px;top:286px">=<span style="color:#00f">C8</span>-<span style="color:#008000">B8</span></span>
<div class="a" style="left:379px;top:279px;width:81px;height:24px;border:1px solid #008000"></div>
<div class="a" style="left:461px;top:279px;width:85px;height:24px;border:1px solid #00f"></div>
<div class="a" style="left:378px;top:278px;width:5px;height:5px;background:#008000"></div>
<div class="a" style="left:457px;top:278px;width:5px;height:5px;background:#008000"></div>
<div class="a" style="left:378px;top:301px;width:5px;height:5px;background:#008000"></div>
<div class="a" style="left:457px;top:301px;width:5px;height:5px;background:#008000"></div>
<div class="a" style="left:460px;top:278px;width:5px;height:5px;background:#00f"></div>
<div class="a" style="left:544px;top:278px;width:5px;height:5px;background:#00f"></div>
<div class="a" style="left:460px;top:301px;width:5px;height:5px;background:#00f"></div>
<div class="a" style="left:544px;top:301px;width:5px;height:5px;background:#00f"></div>
<div class="a" style="left:630px;top:278px;width:97px;height:22px;border:3px solid #000"></div>
<div class="a" style="left:631px;top:279px;width:99px;height:24px;border:1px dotted #fff"></div>
<div class="a" style="left:729px;top:303px;width:5px;height:5px;background:#000;border:1px solid #fff;box-sizing:border-box"></div>
<div class="a" style="left:2px;top:894px;width:1278px;height:16px;background:#d4d0c8"></div>
<div class="a chk" style="left:1263px;top:88px;width:15px;height:806px;background-position:1px 0"></div>
<div class="a" style="left:1263px;top:88px;width:15px;height:4px;background:#d4d0c8;border-top:1px solid #d4d0c8;box-shadow:inset 1px 1px 0 #fff,inset -1px 0 0 #808080;border-bottom:1px solid #202020"></div>
<div class="vsb" style="left:1263px;top:94px;width:15px;height:16px"></div>
<div class="vsb" style="left:1263px;top:110px;width:15px;height:731px"></div>
<div class="vsb" style="left:1263px;top:880px;width:15px;height:15px;border-bottom-color:#000"></div>
<svg style="left:1267px;top:100px" width="7" height="4" viewBox="0 0 7 4" ><path d="M0 4h7l-3.500 -4z" fill="#000"/></svg>
<svg style="left:1267px;top:885px" width="7" height="4" viewBox="0 0 7 4" ><path d="M0 0h7l-3.500 4z" fill="#000"/></svg>
<div class="a" style="left:2px;top:894px;width:267px;height:1px;background:#404040"></div>
<div class="a chk" style="left:290px;top:894px;width:954px;height:15px"></div>
<div class="hsb" style="left:291px;top:894px;width:739px;height:15px"></div>
<div class="hsb" style="left:274px;top:894px;width:16px;height:15px"></div>
<div class="hsb" style="left:1242px;top:894px;width:16px;height:15px"></div>
<div class="a" style="left:268px;top:894px;width:6px;height:15px;background:linear-gradient(to right,#d4d0c8 0 1px,#fff 1px 2px,#d4d0c8 2px 4px,#808080 4px 5px,#000 5px 6px);border-bottom:1px solid #808080;box-sizing:border-box"></div>
<div class="a" style="left:1258px;top:894px;width:6px;height:15px;background:linear-gradient(to right,#d4d0c8 0 1px,#fff 1px 2px,#d4d0c8 2px 4px,#808080 4px 5px,#000 5px 6px);border-bottom:1px solid #808080;box-sizing:border-box"></div><div class="a" style="left:1263px;top:894px;width:1px;height:15px;background:#000"></div><div class="a" style="left:1279px;top:88px;width:1px;height:822px;background:#fff"></div>
<svg style="left:279px;top:898px" width="4" height="7" viewBox="0 0 4 7" ><path d="M4 0v7l-4 -3.500z" fill="#000"/></svg>
<svg style="left:1248px;top:898px" width="4" height="7" viewBox="0 0 4 7" ><path d="M0 0v7l4 -3.500z" fill="#000"/></svg>
<svg style="left:0px;top:894px" width="270" height="16" viewBox="0 0 270 16" ><path d="M62 0.500 L69 14.500 L115 14.500 L121.500 0.500 Z" fill="#fff" stroke="none"/><path d="M62 0 L69 14.500 L115 14.500 L122 0" fill="none" stroke="#000" stroke-width="1"/><path d="M118 8 L121 14.500 L160 14.500 L167 0 M163 8 L166 14.500 L205 14.500 L212 0" fill="none" stroke="#000" stroke-width="1"/><path d="M5.500 5v7M11.500 5v7l-4 -3.500z M26.500 5v7l-4 -3.500z M36.500 5v7l4 -3.500z M51.500 5v7l4 -3.500z M57.500 5v7" fill="#000" stroke="#000" stroke-width="1"/><path d="M61.500 1v14" stroke="#808080"/></svg>
<span class="t" style="left:71.5px;top:896.5px;font-weight:bold;font-size:12px;letter-spacing:.2px">техник</span>
<span class="t" style="left:125px;top:897px;font-size:11px;letter-spacing:.3px">Лист2</span>
<span class="t" style="left:170px;top:897px;font-size:11px;letter-spacing:.3px">Лист3</span>
<div class="a" style="left:0;top:910px;width:1280px;height:21px;background:#d4d0c8;border-top:1px solid #fff"></div>
<span class="t" style="left:5px;top:917px">Готово</span>
<div class="sp" style="left:936px;width:34px"></div>
<div class="sp" style="left:972px;width:111px"></div>
<div class="sp" style="left:1085px;width:25px"></div>
<div class="sp" style="left:1112px;width:26px"></div>
<div class="sp" style="left:1141px;width:25px"></div>
<div class="sp" style="left:1169px;width:28px"></div>
<div class="sp" style="left:1200px;width:25px"></div>
<div class="sp" style="left:1227px;width:31px"></div>
<span class="t" style="left:1143px;top:917px;letter-spacing:-.4px">NUM</span>
<div class="a" style="left:0;top:931px;width:1280px;height:29px;background:#d4d0c8;border-top:1px solid #fff"></div>
<div class="btn" style="left:2px;top:934px;width:51px;height:22px"></div>
<span class="t" style="left:22px;top:938.5px;font-weight:bold;font-size:12px">Пуск</span>
<svg style="left:4px;top:937px" width="16" height="15" viewBox="0 0 16 15" ><path d="M1 3q3 -2 6 0l-1 5q-3 -2 -6 0z" fill="#e8501c"/><path d="M8 3q3 2 6 0l-1 5q-3 2 -6 0z" fill="#6cb82c"/><path d="M0 9q3 -2 6 0l-1 5q-3 -2 -6 0z" fill="#2c6cd8"/><path d="M7 9q3 2 6 0l-1 5q-3 2 -6 0z" fill="#f4c01c"/></svg>
<svg style="left:61px;top:938px" width="16" height="16" viewBox="0 0 16 16" ><rect x="1" y="1" width="14" height="14" rx="3.500" fill="#3f86e4" stroke="#1c4ca8"/><rect x="3.500" y="3.500" width="8" height="9" rx="1" fill="#fdfbe8"/><path d="M6 10l5 -5.500" stroke="#405060" stroke-width="1.600"/><path d="M11 4l2 -1" stroke="#e05020" stroke-width="1.600"/></svg>
<svg style="left:84px;top:937px" width="17" height="17" viewBox="0 0 17 17" ><text x="8" y="14.500" text-anchor="middle" font-family="Liberation Sans,sans-serif" font-weight="bold" font-size="19" fill="#2f80e8" stroke="#2f80e8" stroke-width=".7">e</text><ellipse cx="8.500" cy="8.500" rx="9" ry="3.200" fill="none" stroke="#58b0f4" stroke-width="1.300" transform="rotate(-28 8.5 8.5)" stroke-dasharray="19 8 30"/></svg>
<svg style="left:107px;top:938px" width="15" height="16" viewBox="0 0 15 16" ><path d="M0.500 0.500h12l2 2v13h-14z" fill="#1c2cd8" stroke="#0c1470"/><rect x="4" y="1" width="7" height="4" fill="#d8d8e8"/><rect x="2" y="7" width="11" height="7" fill="#fff"/><text x="7.500" y="13.500" font-family="Liberation Sans,sans-serif" font-weight="bold" font-style="italic" font-size="7.500" text-anchor="middle" fill="#e01c1c">X<tspan fill="#2030d0">P</tspan></text></svg>
<svg style="left:130px;top:938px" width="16" height="16" viewBox="0 0 16 16" ><circle cx="8" cy="8" r="7.500" fill="#3c8c2c"/><circle cx="8" cy="8" r="7.500" fill="none" stroke="#d8c020" stroke-width="1" stroke-dasharray="8 6"/><rect x="4" y="4" width="9" height="8" rx="2" fill="#c8c4b8" stroke="#807c70"/></svg>
<svg style="left:153px;top:938px" width="16" height="16" viewBox="0 0 16 16" ><circle cx="8" cy="8" r="7" fill="#fff" stroke="#e05010" stroke-width="2"/><path d="M8 1a7 7 0 0 1 7 7" fill="none" stroke="#40a030" stroke-width="2"/><path d="M15 8a7 7 0 0 1 -7 7" fill="none" stroke="#f0b010" stroke-width="2"/><path d="M8 15a7 7 0 0 1 -7 -7" fill="none" stroke="#2860d0" stroke-width="2"/><path d="M6 4.500l5 3.500l-5 3.500z" fill="#202020"/></svg>
<div class="tk" style="left:186px"><span class="t">ЧП &quot;МЧСП Кентав...</span></div>
<div class="tk" style="left:321px"><span class="t">1С:Предприятие -...</span></div>
<div class="tk on" style="left:456px"><span class="t">Microsoft Excel -...</span></div>
<div class="tk" style="left:591px"><span class="t">Total Commander ...</span></div>
<div class="tk" style="left:726px"><span class="t">диплом Шеремет ...</span></div>
<div class="tk" style="left:861px"><span class="t">Приложение Шер...</span></div>
<div class="tk" style="left:996px"><span class="t">Диск 3,5 (A:)</span></div>
<svg style="left:190px;top:937px" width="16" height="16" viewBox="0 0 16 16" ><rect x="0.500" y="0.500" width="15" height="15" rx="2" fill="#f4f4f8" stroke="#8890a0"/><path d="M4 12q4 2 8 0M5 10q3 1.500 6 0" stroke="#3860b0" fill="none"/><path d="M8 3q-2 2 0 3.500q2 1.500 0 3" stroke="#e06020" fill="none" stroke-width="1.200"/></svg>
<svg style="left:325px;top:937px" width="16" height="17" viewBox="0 0 16 17" ><rect x="0" y="0" width="16" height="12" fill="#f8e810"/><path d="M2 8l5-5 3 3 4-4" stroke="#d01818" stroke-width="2.500" fill="none"/><path d="M2 5l4 4 8-5" stroke="#2838c8" stroke-width="1.500" fill="none"/><text x="9" y="17" font-family="Liberation Sans,sans-serif" font-weight="bold" font-size="6" fill="#000">V7</text></svg>
<svg style="left:460px;top:937px" width="17" height="16" viewBox="0 0 17 16" ><rect width="16" height="16" fill="#3c7c34"/><rect x="2" y="2" width="12" height="12" fill="#fff"/><path d="M3 4 L6.500 4 L8 6.200 L9.500 4 L13 4 L9.800 8 L13 12 L9.500 12 L8 9.800 L6.500 12 L3 12 L6.200 8 Z" fill="#2a7e2a" stroke="#1c5c1c" stroke-width=".5"/></svg>
<svg style="left:595px;top:937px" width="15" height="16" viewBox="0 0 15 16" ><path d="M0.500 0.500h12l2 2v13h-14z" fill="#1c2cd8" stroke="#0c1470"/><rect x="4" y="1" width="7" height="4" fill="#d8d8e8"/><rect x="2" y="7" width="11" height="7" fill="#fff"/><text x="7.500" y="13.500" font-family="Liberation Sans,sans-serif" font-weight="bold" font-style="italic" font-size="7.500" text-anchor="middle" fill="#e01c1c">X<tspan fill="#2030d0">P</tspan></text></svg>
<svg style="left:730px;top:937px" width="16" height="16" viewBox="0 0 16 16" ><path d="M4.500 0.500h8l3 3v12h-11z" fill="#dce8fc" stroke="#4868b0"/><path d="M7 8h7M7 10h7M7 12h7" stroke="#88a4e0"/><rect x="0.500" y="2.500" width="9" height="9" fill="#2c50b8" stroke="#18307c"/><text x="5" y="10" font-family="Liberation Serif,serif" font-weight="bold" font-style="italic" font-size="8" text-anchor="middle" fill="#fff">W</text></svg>
<svg style="left:865px;top:937px" width="16" height="16" viewBox="0 0 16 16" ><path d="M4.500 0.500h8l3 3v12h-11z" fill="#dce8fc" stroke="#4868b0"/><path d="M7 8h7M7 10h7M7 12h7" stroke="#88a4e0"/><rect x="0.500" y="2.500" width="9" height="9" fill="#2c50b8" stroke="#18307c"/><text x="5" y="10" font-family="Liberation Serif,serif" font-weight="bold" font-style="italic" font-size="8" text-anchor="middle" fill="#fff">W</text></svg>
<svg style="left:1000px;top:937px" width="18" height="16" viewBox="0 0 18 16" ><path d="M1 10l4-3h9l3 3v4h-16z" fill="#c8c8d0" stroke="#707080"/><rect x="6" y="1" width="7" height="8" fill="#3858c8" stroke="#182878"/><rect x="8" y="1.500" width="3" height="3" fill="#e0e0f0"/><rect x="3" y="12" width="8" height="1.500" fill="#404050"/></svg>
<div class="a" style="left:1140px;top:938px;width:16px;height:16px;background:#0a246a"></div>
<span class="t" style="left:1141px;top:941px;color:#fff;font-size:10.5px;letter-spacing:-.9px">RU</span>
<div class="a" style="left:1160px;top:935px;width:1px;height:20px;background:#808080;box-shadow:1px 0 0 #fff"></div>
<div class="a" style="left:1165px;top:934px;width:113px;height:22px;box-sizing:border-box;border:1px solid;border-color:#808080 #fff #fff #808080"></div>
<span class="t" style="left:1170px;top:937px;font-size:15px;font-weight:bold;letter-spacing:-1px">«</span>
<svg style="left:1183px;top:938px" width="16" height="16" viewBox="0 0 16 16" ><rect x="0.500" y="0.500" width="15" height="15" fill="#fff" stroke="#e8a828"/><text x="8" y="12.500" font-family="Liberation Sans,sans-serif" font-weight="bold" font-style="italic" font-size="11.500" text-anchor="middle" fill="#e8a010" stroke="#e8a010" stroke-width=".5" textLength="13" lengthAdjust="spacingAndGlyphs">U3</text></svg>
<svg style="left:1202px;top:938px" width="15" height="16" viewBox="0 0 15 16" ><path d="M2 11l8-4 4 3-8 5z" fill="#a8a8b8" stroke="#585868"/><path d="M1 4l4-3v2h4v4h-4v2z" fill="#28a828" stroke="#106810" stroke-width=".6" transform="rotate(35 5 5)"/><rect x="6" y="9" width="5" height="3" fill="#3848a8" transform="rotate(-25 8 10)"/></svg>
<svg style="left:1219px;top:938px" width="16" height="16" viewBox="0 0 16 16" ><circle cx="8" cy="8" r="7" fill="#38a028" stroke="#1c6c14" stroke-dasharray="2 1.500"/><path d="M4 6h8v6h-8z M7 3h2v3h-2z" fill="#f0e020"/><path d="M5.500 8v2M8 8v2M10.500 8v2" stroke="#506010"/></svg>
<span class="t" style="left:1243px;top:941px;font-size:11px">18:20</span>
</body></html>
